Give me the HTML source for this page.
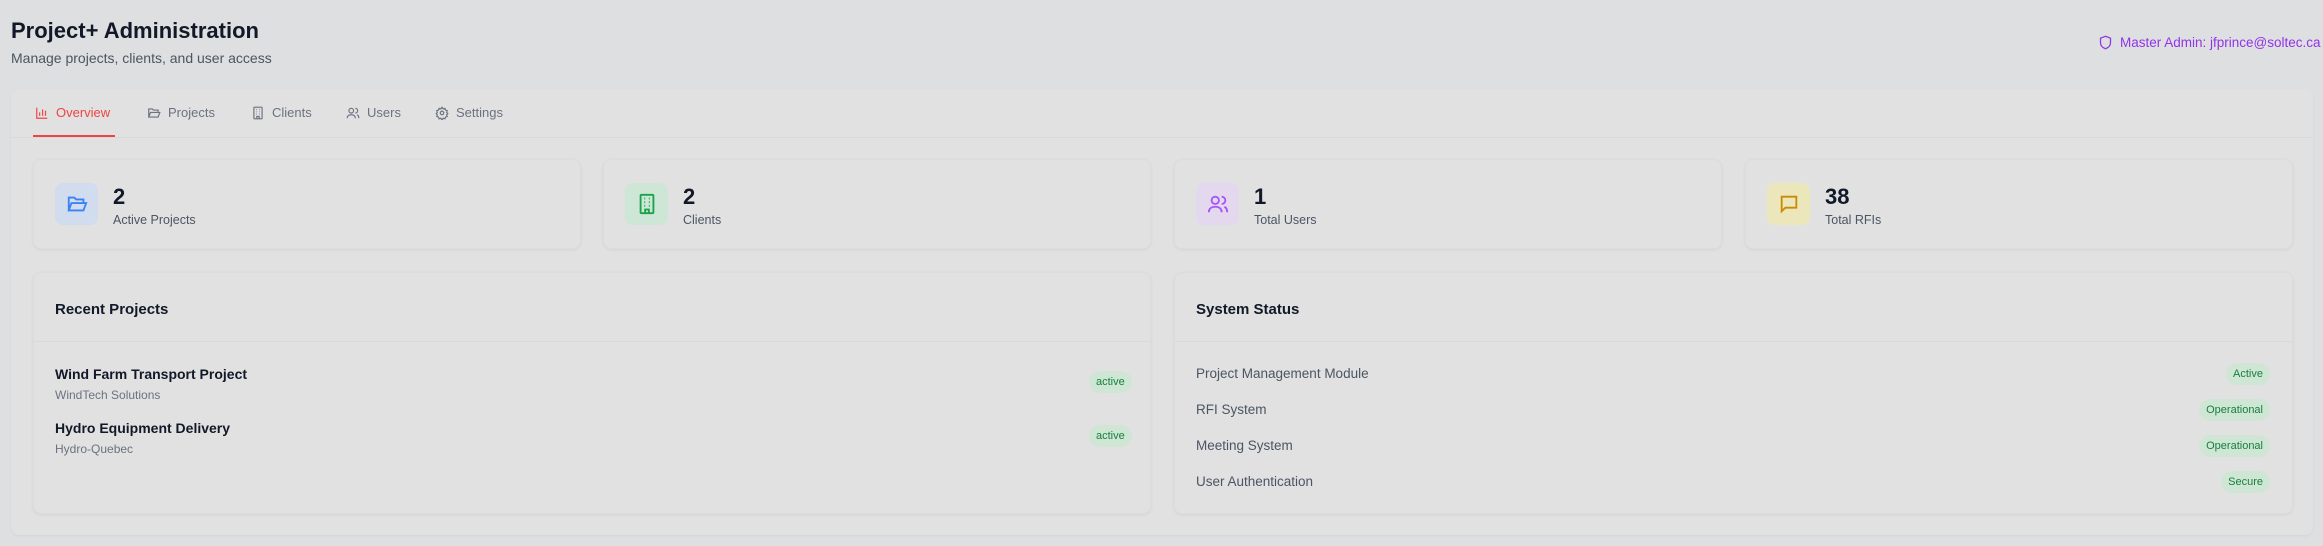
<!DOCTYPE html>
<html><head><meta charset="utf-8"><style>
*{box-sizing:border-box;margin:0;padding:0}
body{width:2323px;height:546px;background:#dedfe0;font-family:"Liberation Sans",sans-serif;position:relative;overflow:hidden;color:#111827}
.a{position:absolute}
h1{position:absolute;left:11px;top:18px;font-size:22px;font-weight:bold;color:#111827}
.sub{left:11px;top:50px;font-size:14px;color:#4b5563}
.admin{left:2098px;top:34px;font-size:13.5px;color:#9333ea;display:flex;align-items:center;gap:7px}
.main{left:11px;top:89px;width:2302px;height:446px;background:#e1e1e1;border-radius:8px;box-shadow:0 1px 2px rgba(0,0,0,.05)}
.tabline{left:11px;top:137px;width:2302px;height:1px;background:#d9d9d9}
.tab{top:105px;font-size:13px;color:#6b7280;display:flex;align-items:center;gap:7px}
.tab svg{width:14px;height:14px}
.ul{left:33px;top:135px;width:82px;height:2px;background:#ef4444}
.card{top:159px;width:548px;height:90px;background:#e1e1e1;border-radius:8px;box-shadow:0 1px 3px rgba(0,0,0,.06);border:1px solid #dcdcdc}
.ib{position:absolute;left:21px;top:23px;width:43px;height:42px;border-radius:8px;display:flex;align-items:center;justify-content:center}
.num{position:absolute;left:79px;top:24px;font-size:22px;font-weight:bold;color:#111827}
.lab{position:absolute;left:79px;top:53px;font-size:12.5px;color:#4b5563}
.panel{top:272px;height:242px;background:#e1e1e1;border-radius:8px;box-shadow:0 1px 3px rgba(0,0,0,.06);border:1px solid #dcdcdc}
.ph{position:absolute;left:0;right:0;top:68px;height:1px;background:#d9d9d9}
.pt{position:absolute;left:21px;top:28px;font-size:15px;font-weight:bold;color:#111827}
.badge{position:absolute;height:22px;line-height:22px;padding:0 7px;border-radius:11px;background:#cfe6d5;color:#15803d;font-size:11px}
.it{position:absolute;left:21px;font-size:14px;font-weight:bold;color:#111827}
.is{position:absolute;left:21px;font-size:12px;color:#6b7280}
.st{position:absolute;left:21px;font-size:13.5px;color:#4b5563}
</style></head><body>
<h1>Project+ Administration</h1>
<div class="a sub">Manage projects, clients, and user access</div>
<div class="a admin"><svg width="15" height="17" viewBox="0 0 24 24" fill="none" stroke="#9333ea" stroke-width="2"><path d="M12 2l8 3v7c0 5-3.5 8.5-8 10-4.5-1.5-8-5-8-10V5z"/></svg>Master Admin: jfprince@soltec.ca</div>
<div class="a main"></div>
<div class="a tabline"></div>
<div class="a tab" style="left:35px;color:#ef4444"><svg viewBox="0 0 24 24" fill="none" stroke="#ef4444" stroke-width="2"><path d="M3 3v18h18M8 17v-6M13 17V6M18 17v-9"/></svg>Overview</div>
<div class="a tab" style="left:147px"><svg viewBox="0 0 24 24" fill="none" stroke="#6b7280" stroke-width="2"><path d="M3 19V5h6l2 2h8v3M3 19l3-8h16l-3 8z"/></svg>Projects</div>
<div class="a tab" style="left:251px"><svg viewBox="0 0 24 24" fill="none" stroke="#6b7280" stroke-width="2"><rect x="5" y="2" width="14" height="20" rx="1"/><path d="M9 6h1M14 6h1M9 10h1M14 10h1M9 14h1M14 14h1M10 22v-4h4v4"/></svg>Clients</div>
<div class="a tab" style="left:346px"><svg viewBox="0 0 24 24" fill="none" stroke="#6b7280" stroke-width="2"><circle cx="9" cy="8" r="4"/><path d="M2 21c0-4 3-6 7-6s7 2 7 6M16 4a4 4 0 010 8M19 15c2 1 3 3 3 6"/></svg>Users</div>
<div class="a tab" style="left:435px"><svg viewBox="0 0 24 24" fill="none" stroke="#6b7280" stroke-width="2"><circle cx="12" cy="12" r="3"/><path d="M12 2l2 3 3-1 1 3 3 1-1 3 2 2-2 2 1 3-3 1-1 3-3-1-2 3-2-3-3 1-1-3-3-1 1-3-2-2 2-2-1-3 3-1 1-3 3 1z"/></svg>Settings</div>
<div class="a ul"></div>

<div class="a card" style="left:33px"><div class="ib" style="background:#d1dcee"><svg width="22" height="22" viewBox="0 0 24 24" fill="none" stroke="#3b82f6" stroke-width="2"><path d="M3 19V5h6l2 2h8v3M3 19l3-8h16l-3 8z"/></svg></div><div class="num">2</div><div class="lab">Active Projects</div></div>
<div class="a card" style="left:603px"><div class="ib" style="background:#cde6d5"><svg width="22" height="22" viewBox="0 0 24 24" fill="none" stroke="#16a34a" stroke-width="2"><rect x="5" y="2" width="14" height="20" rx="1"/><path d="M9 6h1M14 6h1M9 10h1M14 10h1M9 14h1M14 14h1M10 22v-4h4v4"/></svg></div><div class="num">2</div><div class="lab">Clients</div></div>
<div class="a card" style="left:1174px"><div class="ib" style="background:#e3d8ee"><svg width="22" height="22" viewBox="0 0 24 24" fill="none" stroke="#a855f7" stroke-width="2"><circle cx="9" cy="8" r="4"/><path d="M2 21c0-4 3-6 7-6s7 2 7 6M16 4a4 4 0 010 8M19 15c2 1 3 3 3 6"/></svg></div><div class="num">1</div><div class="lab">Total Users</div></div>
<div class="a card" style="left:1745px"><div class="ib" style="background:#ece6bb"><svg width="22" height="22" viewBox="0 0 24 24" fill="none" stroke="#ca8a04" stroke-width="2"><path d="M4 4h16v12H8l-4 4z"/></svg></div><div class="num">38</div><div class="lab">Total RFIs</div></div>

<div class="a panel" style="left:33px;width:1118px"><div class="pt">Recent Projects</div><div class="ph"></div>
<div class="it" style="top:93px">Wind Farm Transport Project</div><div class="is" style="top:115px">WindTech Solutions</div><div class="badge" style="left:1055px;top:98px">active</div>
<div class="it" style="top:147px">Hydro Equipment Delivery</div><div class="is" style="top:169px">Hydro-Quebec</div><div class="badge" style="left:1055px;top:152px">active</div>
</div>
<div class="a panel" style="left:1174px;width:1119px"><div class="pt">System Status</div><div class="ph"></div>
<div class="st" style="top:93px">Project Management Module</div><div class="badge" style="right:22px;top:90px">Active</div>
<div class="st" style="top:129px">RFI System</div><div class="badge" style="right:22px;top:126px">Operational</div>
<div class="st" style="top:165px">Meeting System</div><div class="badge" style="right:22px;top:162px">Operational</div>
<div class="st" style="top:201px">User Authentication</div><div class="badge" style="right:22px;top:198px">Secure</div>
</div>
</body></html>
